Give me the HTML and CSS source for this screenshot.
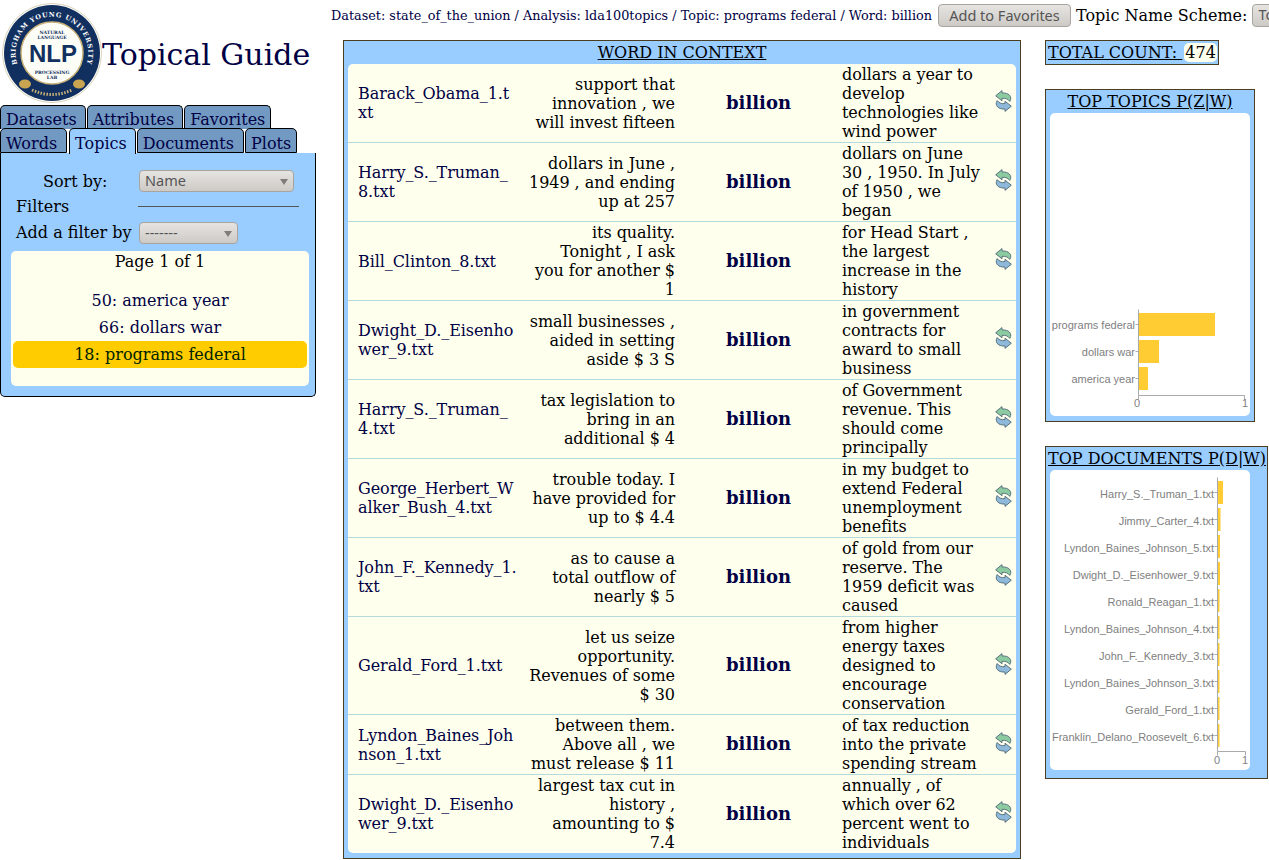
FILE: index.html
```html
<!DOCTYPE html>
<html>

<head>
    <meta name="viewport" content="width=device-width, initial-scale=1">
    <link rel="stylesheet" href="styles.css">
    <title>Topical Guide</title>
</head>

<body>
    <svg class="icon-defs" width="0" height="0">
        <symbol id="refresh" viewBox="0 0 17 22">
            <path class="arrow-green" d="M7 .6 L.7 5.800 L7 10.800 V8.400 C10.500 8 13.200 9 14.800 11.400 C17.800 6.500 13.400 2.400 7 3 Z" />
            <path class="arrow-blue" transform="rotate(180 8.5 11)" d="M7 .6 L.7 5.800 L7 10.800 V8.400 C10.500 8 13.200 9 14.800 11.400 C17.800 6.500 13.400 2.400 7 3 Z" />
        </symbol>
    </svg>

    <div id="page">
        <div id="sidebar">
            <div class="brand">
                <svg class="logo" viewBox="0 0 100 100" width="100" height="100">
                    <defs>
                        <path id="seal-arc" d="M17.500 66.500 A36.400 36.400 0 1 1 82.500 66.500" />
                    </defs>
                    <circle cx="50" cy="50" r="49.500" fill="#fff" stroke="#d8d2b8" />
                    <circle cx="50" cy="50" r="48" fill="#12305f" />
                    <circle cx="50" cy="50" r="31" fill="#fdfdf8" stroke="#c9b27a" stroke-width="1.500" />
                    <text class="seal-ring"><textPath href="#seal-arc" startOffset="50%" text-anchor="middle">BRIGHAM YOUNG UNIVERSITY</textPath></text>
                    <text class="seal-small" x="50" y="31">NATURAL</text>
                    <text class="seal-small" x="50" y="36">LANGUAGE</text>
                    <text class="seal-nlp" x="51" y="59">NLP</text>
                    <text class="seal-small" x="50" y="71">PROCESSING</text>
                    <text class="seal-small" x="50" y="76">LAB</text>
                    <ellipse cx="23" cy="81" rx="6" ry="4.500" fill="#c9a552" />
                    <ellipse cx="77" cy="81" rx="6" ry="4.500" fill="#c9a552" />
                    <path d="M30 87 Q50 96 70 87" fill="none" stroke="#c9b27a" stroke-width="3" stroke-dasharray="1.500 1.500" />
                </svg>
                <h1>Topical Guide</h1>
            </div>

            <div class="tab-row first-row">
                <a class="tab">Datasets</a>
                <a class="tab">Attributes</a>
                <a class="tab">Favorites</a>
            </div>
            <div class="tab-row second-row">
                <a class="tab">Words</a>
                <a class="tab active">Topics</a>
                <a class="tab">Documents</a>
                <a class="tab">Plots</a>
            </div>

            <div class="side-panel">
                <div class="sort-row">
                    <label>Sort by:</label>
                    <div class="select sort-select">Name</div>
                </div>
                <div class="filters-row">
                    <span>Filters</span>
                    <hr>
                </div>
                <div class="add-filter-row">
                    <label>Add a filter by</label>
                    <div class="select filter-select">-------</div>
                </div>
                <div class="topic-list">
                    <div class="page-label">Page 1 of 1</div>
                    <a class="topic-item">50: america year</a>
                    <a class="topic-item">66: dollars war</a>
                    <a class="topic-item selected">18: programs federal</a>
                </div>
            </div>
        </div>

        <div id="main">
            <div class="top-bar">
                <span class="crumbs">Dataset: state_of_the_union / Analysis: lda100topics / Topic: programs federal / Word: billion</span>
                <button class="btn">Add to Favorites</button>
                <span class="scheme-label">Topic Name Scheme:</span>
                <div class="select scheme-select">Top 2</div>
            </div>

            <div class="columns">
                <div class="widget context-widget">
                    <div class="widget-title"><u>WORD IN CONTEXT</u></div>
                    <table class="context-table">
                        <tr>
                            <td class="doc">Barack_Obama_1.txt</td>
                            <td class="left">support that innovation , we will invest fifteen</td>
                            <td class="word">billion</td>
                            <td class="right">dollars a year to develop technologies like wind power</td>
                            <td class="more"><svg width="17" height="22"><use href="#refresh" /></svg></td>
                        </tr>
                        <tr>
                            <td class="doc">Harry_S._Truman_8.txt</td>
                            <td class="left">dollars in June , 1949 , and ending up at 257</td>
                            <td class="word">billion</td>
                            <td class="right">dollars on June 30 , 1950. In July of 1950 , we began</td>
                            <td class="more"><svg width="17" height="22"><use href="#refresh" /></svg></td>
                        </tr>
                        <tr>
                            <td class="doc">Bill_Clinton_8.txt</td>
                            <td class="left">its quality. Tonight , I ask you for another $ 1</td>
                            <td class="word">billion</td>
                            <td class="right">for Head Start , the largest increase in the history</td>
                            <td class="more"><svg width="17" height="22"><use href="#refresh" /></svg></td>
                        </tr>
                        <tr>
                            <td class="doc">Dwight_D._Eisenhower_9.txt</td>
                            <td class="left">small businesses , aided in setting aside $ 3 S</td>
                            <td class="word">billion</td>
                            <td class="right">in government contracts for award to small business</td>
                            <td class="more"><svg width="17" height="22"><use href="#refresh" /></svg></td>
                        </tr>
                        <tr>
                            <td class="doc">Harry_S._Truman_4.txt</td>
                            <td class="left">tax legislation to bring in an additional $ 4</td>
                            <td class="word">billion</td>
                            <td class="right">of Government revenue. This should come principally</td>
                            <td class="more"><svg width="17" height="22"><use href="#refresh" /></svg></td>
                        </tr>
                        <tr>
                            <td class="doc">George_Herbert_Walker_Bush_4.txt</td>
                            <td class="left">trouble today. I have provided for up to $ 4.4</td>
                            <td class="word">billion</td>
                            <td class="right">in my budget to extend Federal unemployment benefits</td>
                            <td class="more"><svg width="17" height="22"><use href="#refresh" /></svg></td>
                        </tr>
                        <tr>
                            <td class="doc">John_F._Kennedy_1.txt</td>
                            <td class="left">as to cause a total outflow of nearly $ 5</td>
                            <td class="word">billion</td>
                            <td class="right">of gold from our reserve. The 1959 deficit was caused</td>
                            <td class="more"><svg width="17" height="22"><use href="#refresh" /></svg></td>
                        </tr>
                        <tr>
                            <td class="doc">Gerald_Ford_1.txt</td>
                            <td class="left">let us seize opportunity. Revenues of some $ 30</td>
                            <td class="word">billion</td>
                            <td class="right">from higher energy taxes designed to encourage conservation</td>
                            <td class="more"><svg width="17" height="22"><use href="#refresh" /></svg></td>
                        </tr>
                        <tr>
                            <td class="doc">Lyndon_Baines_Johnson_1.txt</td>
                            <td class="left">between them. Above all , we must release $ 11</td>
                            <td class="word">billion</td>
                            <td class="right">of tax reduction into the private spending stream</td>
                            <td class="more"><svg width="17" height="22"><use href="#refresh" /></svg></td>
                        </tr>
                        <tr>
                            <td class="doc">Dwight_D._Eisenhower_9.txt</td>
                            <td class="left">largest tax cut in history , amounting to $ 7.4</td>
                            <td class="word">billion</td>
                            <td class="right">annually , of which over 62 percent went to individuals</td>
                            <td class="more"><svg width="17" height="22"><use href="#refresh" /></svg></td>
                        </tr>
                    </table>
                </div>

                <div class="right-column">
                    <div class="widget total-widget"><u>TOTAL COUNT:&nbsp;</u><span class="count">474</span></div>

                    <div class="widget topics-widget">
                        <div class="widget-title"><u>TOP TOPICS P(Z|W)</u></div>
                        <div class="chart-box">
                            <svg class="chart" width="200" height="303">
                                <rect class="bar" x="88" y="200" width="77" height="23" />
                                <rect class="bar" x="88" y="227" width="21" height="23" />
                                <rect class="bar" x="88" y="254" width="10" height="23" />
                                <path class="axis" d="M88 196V282H194V286M88 282V286M85 211H88M85 238H88M85 265H88" />
                                <text class="label" x="85" y="216">programs federal</text>
                                <text class="label" x="85" y="243">dollars war</text>
                                <text class="label" x="85" y="270">america year</text>
                                <text class="tick" x="87" y="294">0</text>
                                <text class="tick" x="195" y="294">1</text>
                            </svg>
                        </div>
                    </div>

                    <div class="widget documents-widget">
                        <div class="widget-title"><u>TOP DOCUMENTS P(D|W)</u></div>
                        <div class="chart-box">
                            <svg class="chart" width="200" height="300">
                                <rect class="bar" x="167" y="11" width="6" height="23" />
                                <rect class="bar" x="167" y="38" width="3.500" height="23" />
                                <rect class="bar" x="167" y="65" width="3" height="23" />
                                <rect class="bar" x="167" y="92" width="3" height="23" />
                                <rect class="bar" x="167" y="119" width="2.500" height="23" />
                                <rect class="bar" x="167" y="146" width="2.500" height="23" />
                                <rect class="bar" x="167" y="173" width="2.500" height="23" />
                                <rect class="bar" x="167" y="200" width="2.500" height="23" />
                                <rect class="bar" x="167" y="227" width="2.500" height="23" />
                                <rect class="bar" x="167" y="254" width="2.500" height="23" />
                                <path class="axis" d="M167 7V281H195V285M167 281V285M164 22H167M164 49H167M164 76H167M164 103H167M164 130H167M164 157H167M164 184H167M164 211H167M164 238H167M164 265H167" />
                                <text class="label" x="164" y="28">Harry_S._Truman_1.txt</text>
                                <text class="label" x="164" y="55">Jimmy_Carter_4.txt</text>
                                <text class="label" x="164" y="82">Lyndon_Baines_Johnson_5.txt</text>
                                <text class="label" x="164" y="109">Dwight_D._Eisenhower_9.txt</text>
                                <text class="label" x="164" y="136">Ronald_Reagan_1.txt</text>
                                <text class="label" x="164" y="163">Lyndon_Baines_Johnson_4.txt</text>
                                <text class="label" x="164" y="190">John_F._Kennedy_3.txt</text>
                                <text class="label" x="164" y="217">Lyndon_Baines_Johnson_3.txt</text>
                                <text class="label" x="164" y="244">Gerald_Ford_1.txt</text>
                                <text class="label" x="164" y="271">Franklin_Delano_Roosevelt_6.txt</text>
                                <text class="tick" x="167" y="294">0</text>
                                <text class="tick" x="195" y="294">1</text>
                            </svg>
                        </div>
                    </div>
                </div>
            </div>
        </div>
    </div>
</body>

</html>
```

FILE: styles.css
```css
html,
body {
    height: 860px;
    overflow: hidden;
}

body {
    margin: 0;
    font-family: "DejaVu Serif", serif;
    font-size: 16px;
    line-height: 19px;
    color: #000;
    background: #fff;
}

.icon-defs {
    position: absolute;
}

#page {
    display: flex;
    align-items: flex-start;
    width: 1400px;
}

/* left column */
#sidebar {
    width: 331px;
    flex: none;
}

.brand {
    display: flex;
    align-items: center;
    height: 105px;
    padding-left: 2px;
    box-sizing: border-box;
}

.logo {
    flex: none;
    margin-top: 1px;
}

.seal-ring {
    font-family: "DejaVu Serif", serif;
    font-size: 6.500px;
    font-weight: bold;
    letter-spacing: .8px;
    fill: #fff;
}

.seal-small {
    font-family: "DejaVu Serif", serif;
    font-size: 4.500px;
    font-weight: bold;
    text-anchor: middle;
    fill: #12305f;
}

.seal-nlp {
    font-family: "Liberation Sans", sans-serif;
    font-size: 24px;
    font-weight: bold;
    text-anchor: middle;
    fill: #12305f;
}

h1 {
    margin: 4px 0 0 0;
    font-size: 30px;
    line-height: 34px;
    font-weight: normal;
    color: #000044;
    white-space: nowrap;
}

.tab-row {
    display: flex;
    gap: 1px;
    padding-left: 0;
}

.tab {
    box-sizing: border-box;
    padding: 4px 8px 0 5px;
    background: #7299c2;
    border: 1px solid #000;
    border-bottom: none;
    border-radius: 5px 5px 0 0;
    color: #000044;
    white-space: nowrap;
}

.tab:last-child {
    padding-right: 5px;
}

.first-row .tab {
    height: 24px;
}

.first-row {
    height: 23px;
}

.second-row {
    height: 25px;
    position: relative;
    z-index: 1;
}

.second-row .tab {
    height: 25px;
    padding-top: 5px;
    padding-right: 9px;
    border-bottom: 1px solid #000;
}

.second-row .tab:last-child {
    padding-right: 5px;
}

.second-row .tab.active {
    height: 26px;
    margin: 0 0 0 1px;
    padding-right: 8px;
    background: #99ccff;
    border-bottom: none;
}

.side-panel {
    box-sizing: border-box;
    width: 316px;
    height: 244px;
    margin-top: 0;
    padding: 17px 6px 0 10px;
    background: #99ccff;
    border: 1px solid #000;
    border-top: none;
    border-radius: 0 0 5px 5px;
}

.sort-row,
.filters-row,
.add-filter-row {
    display: flex;
    align-items: center;
    padding-left: 5px;
}

.sort-row {
    height: 22px;
    padding-left: 32px;
}

.sort-row label {
    width: 96px;
}

.filters-row {
    height: 19px;
    margin-top: 5px;
}

.filters-row span {
    width: 122px;
}

.filters-row hr {
    flex: none;
    width: 161px;
    margin: 0;
    border: none;
    border-top: 1px solid #555;
}

.add-filter-row {
    height: 21px;
    margin-top: 6px;
    white-space: nowrap;
}

.add-filter-row label {
    width: 123px;
}

.select {
    position: relative;
    box-sizing: border-box;
    height: 22px;
    padding-left: 5px;
    font-family: "Noto Sans", sans-serif;
    font-size: 14.500px;
    line-height: 19px;
    color: #555;
    background: linear-gradient(#e6e4e1, #cdcac6);
    border: 1px solid #a8a5a0;
    border-radius: 4px;
}

.select::after {
    content: "";
    position: absolute;
    right: 5px;
    top: 8px;
    border-left: 4px solid transparent;
    border-right: 4px solid transparent;
    border-top: 6px solid #807d79;
}

.sort-select {
    width: 155px;
}

.filter-select {
    width: 99px;
}

.scheme-select {
    width: 100px;
    height: 23px;
    flex: none;
}

.topic-list {
    height: 135px;
    box-sizing: border-box;
    margin: 8px 0 0 0;
    padding: 1px 2px;
    background: #ffffee;
    border-radius: 5px;
    text-align: center;
}

.page-label {
    height: 35px;
}

.topic-item {
    display: block;
    height: 27px;
    line-height: 27px;
    border-radius: 5px;
    color: #000044;
}

.topic-item.selected {
    background: #ffcc00;
    color: #002200;
}

/* main area */
#main {
    padding-top: 4px;
}

.top-bar {
    display: flex;
    align-items: center;
    height: 23px;
    white-space: nowrap;
}

.crumbs {
    font-size: 12.800px;
    color: #000044;
    margin-right: 6px;
}

.btn {
    box-sizing: border-box;
    height: 23px;
    width: 133px;
    padding: 0 0 2px;
    font-family: "Noto Sans", sans-serif;
    font-size: 14.500px;
    color: #555;
    background: linear-gradient(#e6e4e1, #cdcac6);
    border: 1px solid #a8a5a0;
    border-radius: 4px;
}

.scheme-label {
    margin: 0 5px;
}

.columns {
    display: flex;
    align-items: flex-start;
    gap: 24px;
    margin: 13px 0 0 12px;
}

.widget {
    box-sizing: border-box;
    background: #99ccff;
    border: 1px solid #4d3d1f;
    padding: 0 4px;
}

.widget-title {
    height: 23px;
    padding-top: 2px;
    box-sizing: border-box;
    text-align: center;
    white-space: nowrap;
}

.context-widget {
    width: 678px;
    height: 819px;
    flex: none;
}

.context-table {
    width: 668px;
    table-layout: fixed;
    border-collapse: separate;
    border-spacing: 0;
    background: #ffffee;
    border-radius: 5px;
}

.context-table td {
    padding: 1px 0;
    border-bottom: 1px solid #b5d9dc;
    vertical-align: middle;
}

.context-table tr:last-child td {
    border-bottom: none;
}

.context-table .doc {
    width: 181px;
    box-sizing: border-box;
    padding-left: 10px;
    padding-right: 11px;
    letter-spacing: -.08px;
    word-break: break-all;
    color: #000044;
}

.context-table .left {
    width: 146px;
    letter-spacing: -.05px;
    text-align: right;
}

.context-table .word {
    width: 167px;
    padding-bottom: 3px;
    text-align: center;
    font-size: 18px;
    font-weight: bold;
    color: #000044;
}

.context-table .right {
    width: 143px;
    letter-spacing: -.08px;
}

.context-table .more {
    padding-left: 6px;
    padding-bottom: 5px;
}

.more svg {
    display: block;
    margin: 0 auto;
}

.arrow-green {
    fill: #8ccaa0;
    stroke: #5a7480;
    stroke-linejoin: round;
}

.arrow-blue {
    fill: #8fb9da;
    stroke: #5a7480;
    stroke-linejoin: round;
}

.right-column {
    display: flex;
    flex-direction: column;
    align-items: flex-start;
    flex: none;
    width: 240px;
}

.total-widget {
    height: 25px;
    width: 174px;
    padding: 2px 2px 0;
    white-space: nowrap;
}

.count {
    display: inline-block;
    margin-left: 2px;
    padding: 0 1px;
    background: #ffffee;
    border-radius: 5px;
}

.topics-widget {
    width: 210px;
    height: 333px;
    margin-top: 24px;
}

.documents-widget {
    width: 223px;
    height: 333px;
    margin-top: 24px;
}

.documents-widget .widget-title {
    margin-left: -2px;
    text-align: left;
}

.chart-box {
    width: 200px;
    background: #fff;
    border-radius: 5px;
}

.topics-widget .chart-box {
    height: 303px;
}

.documents-widget .chart-box {
    height: 300px;
}

.chart {
    display: block;
}

.bar {
    fill: #ffcc33;
}

.axis {
    fill: none;
    stroke: #aaa;
    stroke-width: 1;
    transform: translate(.5px, .5px);
}

.label {
    font-family: "Liberation Sans", sans-serif;
    font-size: 11px;
    text-anchor: end;
    fill: #808080;
}

.tick {
    font-family: "Liberation Sans", sans-serif;
    font-size: 11px;
    text-anchor: middle;
    fill: #808080;
}
```
